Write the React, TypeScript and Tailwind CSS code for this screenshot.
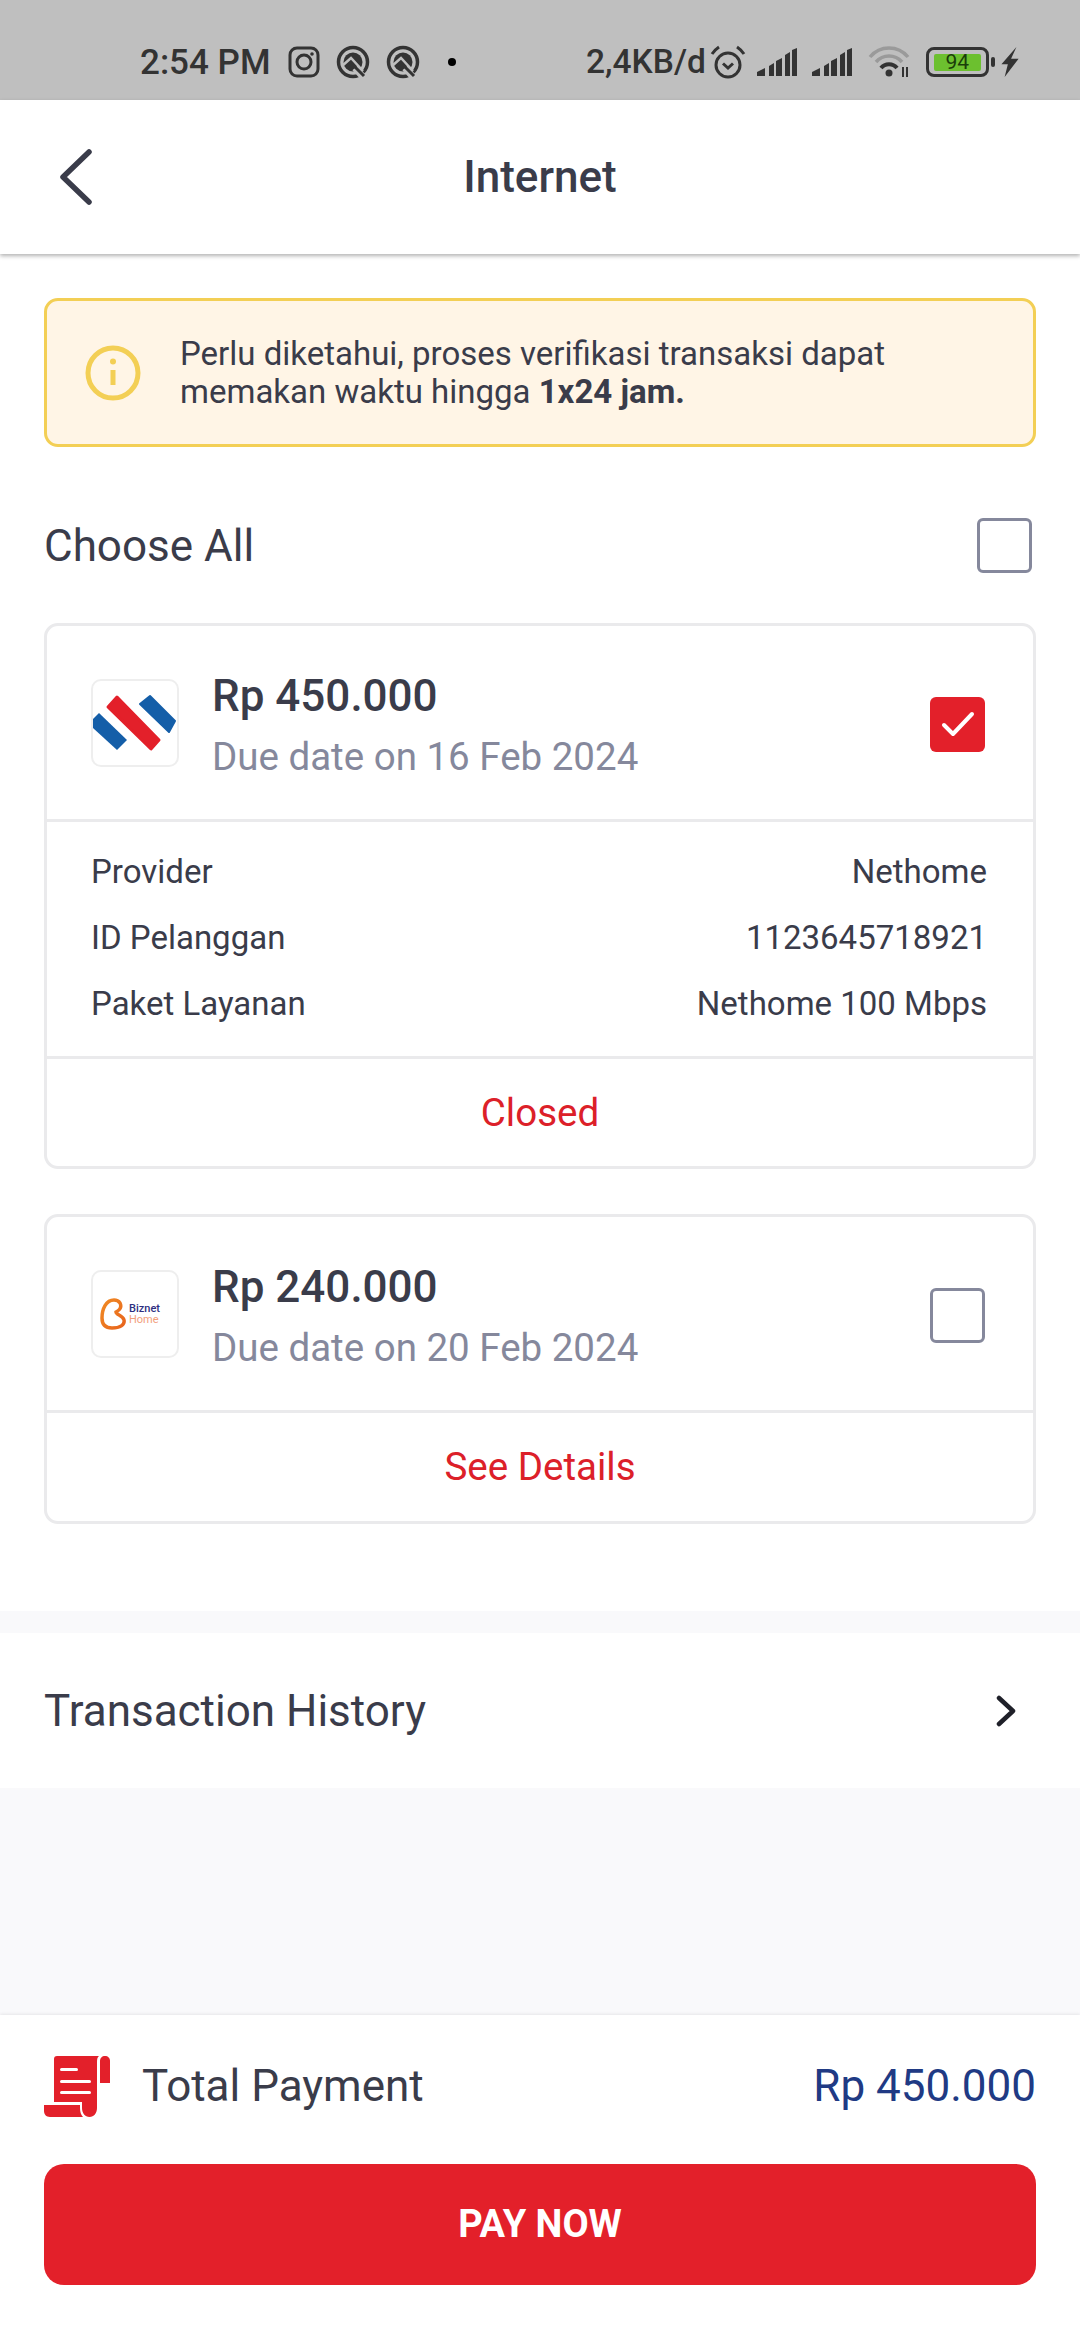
import React from 'react';

function StatusBar() {
  return (
    <div className="h-[100px] bg-[#bfbfbf] text-[#333333]">
      <div className="flex items-center h-full pt-[24px] pl-[140px] font-['Roboto',sans-serif]">
        <span className="text-[35px] font-medium leading-none w-[148px] whitespace-nowrap">2:54 PM</span>
        <svg width="32" height="32" viewBox="0 0 32 32" fill="none" stroke="#333" strokeWidth="3">
          <rect x="2" y="2" width="28" height="28" rx="7" />
          <circle cx="16" cy="16" r="7" />
          <circle cx="24" cy="8" r="1.800" fill="#333" stroke="none" />
        </svg>
        <QIcon className="ml-[16px]" />
        <QIcon className="ml-[16px]" />
        <div className="w-[8px] h-[8px] rounded-full bg-black ml-[28px]" />
        <span className="text-[33.500px] font-medium leading-none ml-[130px] whitespace-nowrap">2,4KB/d</span>
        <svg width="36" height="34" viewBox="0 0 36 34" fill="none" stroke="#333" strokeWidth="3" className="ml-[4px]">
          <circle cx="18" cy="20" r="12" />
          <path d="M13 18.500 18 23 23 18.500" />
          <path d="M2 9C4 6 6 4 9 2M34 9C32 6 30 4 27 2" />
        </svg>
        <Signal className="ml-[11px]" />
        <Signal className="ml-[15px]" />
        <svg width="44" height="32" viewBox="0 0 44 32" fill="none" stroke="#9a9a9a" strokeWidth="3.500" className="ml-[16px]">
          <path d="M2 11C12 -1 30 -1 40 11" />
          <path d="M8 16C15 8 27 8 34 16" />
          <path d="M13 22C17 17 25 17 29 22" stroke="#333" strokeWidth="4" />
          <circle cx="21" cy="27" r="3.500" fill="#333" stroke="none" />
          <path d="M35 21v10M39 21v10" stroke="#333" strokeWidth="2" />
        </svg>
        <div className="ml-[14px] w-[63px] h-[30px] rounded-[8px] border-[3.5px] border-[#333] flex items-center justify-center">
          <div className="w-[47px] h-[17px] rounded-[2px] bg-[#6cc02f] text-[21px] leading-[17px] text-center text-[#1a3d0a]">94</div>
        </div>
        <div className="w-[4px] h-[10px] rounded-[2px] bg-[#333] ml-[2px]" />
        <svg width="18" height="30" viewBox="0 0 16 28" className="ml-[6px]">
          <path d="M14 0 0 16h6L3 28 16 11H9z" fill="#333" />
        </svg>
      </div>
    </div>
  );
}

function QIcon({ className }: { className: string }) {
  return (
    <svg width="34" height="34" viewBox="0 0 34 34" className={className}>
      <circle cx="17" cy="17" r="14.500" fill="none" stroke="#333" strokeWidth="3.500" />
      <circle cx="17" cy="17" r="9.500" fill="#333" />
      <path d="M6 21 15 13 27 26" fill="none" stroke="#bfbfbf" strokeWidth="2.500" />
      <path d="M19 23 29 34" fill="none" stroke="#bfbfbf" strokeWidth="7" />
      <path d="M19 22 28 31" fill="none" stroke="#333" strokeWidth="3" />
    </svg>
  );
}

function Signal({ className }: { className: string }) {
  return (
    <svg width="40" height="28" viewBox="0 0 40 28" fill="#333" className={className}>
      <path d="M0 24 8 20V28H0z" />
      <path d="M12 18 17 15V28H12z" />
      <path d="M19 13 25 10V28H19z" />
      <path d="M28 7 33 4V28H28z" />
      <path d="M35 2 40 0V28H35z" />
    </svg>
  );
}

function Checkbox({ checked }: { checked?: boolean }) {
  if (checked) {
    return (
      <div className="w-[55px] h-[55px] rounded-[6px] bg-[#e3202a] flex items-center justify-center">
        <svg width="34" height="28" viewBox="0 0 34 28" fill="none" stroke="#fff" strokeWidth="4" strokeLinecap="round" strokeLinejoin="round">
          <path d="M3 15 12 24 31 4" />
        </svg>
      </div>
    );
  }
  return <div className="w-[55px] h-[55px] rounded-[6px] border-[3px] border-[#85889c] bg-white" />;
}

function BillHead({ amount, due, logo, checked }: { amount: string; due: string; logo: React.ReactNode; checked?: boolean }) {
  return (
    <div className="h-[193px] flex items-center pl-[44px] pr-[48px]">
      <div className="w-[88px] h-[88px] shrink-0 rounded-[10px] border-2 border-[#eeeeee] overflow-hidden">{logo}</div>
      <div className="ml-[33px] flex-1 pt-[6px]">
        <div className="text-[44px] leading-[52px] font-medium text-[#3a3c4a]">{amount}</div>
        <div className="text-[38.500px] leading-[50px] mt-[10px] text-[#85889c]">{due}</div>
      </div>
      <div className="pt-[3px]">
        <Checkbox checked={checked} />
      </div>
    </div>
  );
}

function DetailRow({ label, value }: { label: string; value: string }) {
  return (
    <div className="flex justify-between text-[33px] leading-[66px] text-[#3a3c4a]">
      <span>{label}</span>
      <span>{value}</span>
    </div>
  );
}

export default function App() {
  return (
    <div className="w-[1080px] h-[2340px] flex flex-col bg-[#f9f9fb] font-['Roboto',sans-serif] overflow-hidden">
      <StatusBar />
      <header className="relative z-10 h-[154px] bg-white shadow-[0_2px_4px_rgba(0,0,0,0.3)] flex items-center justify-center">
        <svg width="36" height="56" viewBox="0 0 36 56" fill="none" stroke="#3a3c4a" strokeWidth="5.500" strokeLinecap="round" strokeLinejoin="round" className="absolute left-[58px]">
          <path d="M31 3 5 28 31 53" />
        </svg>
        <h1 className="text-[44px] font-medium text-[#3a3c4a]">Internet</h1>
      </header>

      <main className="bg-white h-[1357px] px-[44px] pt-[44px]">
        <div className="h-[149px] rounded-[14px] border-[3px] border-[#f3cf55] bg-[#fff5e6] flex items-center pl-[38px]">
          <svg width="56" height="56" viewBox="0 0 56 56" fill="none" stroke="#f3cf55" strokeWidth="5">
            <circle cx="28" cy="28" r="25" />
            <path d="M28 25v15" />
            <circle cx="28" cy="16.500" r="3" fill="#f3cf55" stroke="none" />
          </svg>
          <p className="ml-[39px] text-[33px] leading-[38px] text-[#3a3c4a]">
            Perlu diketahui, proses verifikasi transaksi dapat
            <br />
            memakan waktu hingga <b className="font-bold">1x24 jam.</b>
          </p>
        </div>

        <div className="flex items-center justify-between h-[176px] pr-[4px] pt-[21px]">
          <span className="text-[44px] text-[#3a3c4a]">Choose All</span>
          <Checkbox />
        </div>

        <section className="h-[546px] rounded-[14px] border-[3px] border-[#eaeaec] flex flex-col bg-white">
          <BillHead
            amount="Rp 450.000"
            due="Due date on 16 Feb 2024"
            checked
            logo={
              <svg width="84" height="84" viewBox="0 0 84 84">
                <path d="M24 16 66 59 58 68 15 26Z" fill="#e3202a" stroke="#e3202a" strokeWidth="3" strokeLinejoin="round" />
                <path d="M57 15 82 40 76 51 47 23Z" fill="#145ea8" stroke="#145ea8" strokeWidth="2" strokeLinejoin="round" />
                <path d="M6 32 34 59 24 69 0 47V38Z" fill="#145ea8" />
              </svg>
            }
          />
          <div className="h-[240px] border-y-[3px] border-[#eaeaec] pl-[44px] pr-[46px] pt-[17px]">
            <DetailRow label="Provider" value="Nethome" />
            <DetailRow label="ID Pelanggan" value="1123645718921" />
            <DetailRow label="Paket Layanan" value="Nethome 100 Mbps" />
          </div>
          <div className="flex-1 flex items-center justify-center text-[38.500px] text-[#dc2029]">Closed</div>
        </section>

        <section className="h-[310px] mt-[45px] rounded-[14px] border-[3px] border-[#eaeaec] flex flex-col bg-white">
          <BillHead
            amount="Rp 240.000"
            due="Due date on 20 Feb 2024"
            logo={
              <div className="flex items-center h-full pl-[7px]">
                <svg width="26" height="32" viewBox="0 0 26 32">
                  <defs>
                    <linearGradient id="biznet" x1="0" y1="0" x2="1" y2="1">
                      <stop offset="0" stopColor="#f08a24" />
                      <stop offset="1" stopColor="#e8641c" />
                    </linearGradient>
                  </defs>
                  <path d="M14 2C6 2 2 11 2 20 2 27 6 30 12 30 20 30 25 27 24 22 23 17 16 17 16 14 20 12 22 9 20 5 18 2 15 2 14 2Z" fill="none" stroke="url(#biznet)" strokeWidth="3.500" />
                </svg>
                <div className="ml-[3px] text-[11px] leading-[11px]">
                  <div className="font-medium text-[#2e2f7f]">Biznet</div>
                  <div className="text-[#f2a07b]">Home</div>
                </div>
              </div>
            }
          />
          <div className="flex-1 border-t-[3px] border-[#eaeaec] flex items-center justify-center text-[38.500px] text-[#dc2029]">
            See Details
          </div>
        </section>
      </main>

      <div className="mt-[22px] h-[155px] shrink-0 bg-white flex items-center justify-between pl-[44px] pr-[62px]">
        <span className="text-[44px] text-[#3a3c4a]">Transaction History</span>
        <svg width="24" height="32" viewBox="0 0 24 32" fill="none" stroke="#1f2029" strokeWidth="4.500" strokeLinecap="round" strokeLinejoin="round">
          <path d="M5 3 19 16 5 29" />
        </svg>
      </div>

      <div className="flex-1" />

      <footer className="h-[325px] bg-white shadow-[0_-1px_3px_rgba(0,0,0,0.08)] px-[44px] pt-[40px]">
        <div className="flex items-center h-[62px]">
          <svg width="66" height="61" viewBox="0 0 66 61" fill="#e3202a">
            <path d="M13 0H55C53.500 1 53 3 53 6V52C53 57 50 61 45.500 61S38 57 38 52V46H10V3A3 3 0 0 1 13 0Z" />
            <path d="M56 5C56 2 58 0 61 0S66 2 66 5V27H56Z" />
            <path d="M0 49H36V52C36 56 37 59 39 61H6C2 61 0 58 0 55Z" />
            <g fill="#fff">
              <rect x="16" y="12" width="18" height="3" rx="1.500" />
              <rect x="16" y="24" width="31" height="3" rx="1.500" />
              <rect x="16" y="35" width="31" height="3" rx="1.500" />
            </g>
          </svg>
          <span className="ml-[32px] text-[44px] text-[#3a3c4a]">Total Payment</span>
          <span className="ml-auto text-[44px] text-[#203a84]">Rp 450.000</span>
        </div>
        <button className="mt-[47px] w-full h-[121px] rounded-[20px] bg-[#e3202a] text-white text-[38px] font-bold">PAY NOW</button>
      </footer>
    </div>
  );
}
